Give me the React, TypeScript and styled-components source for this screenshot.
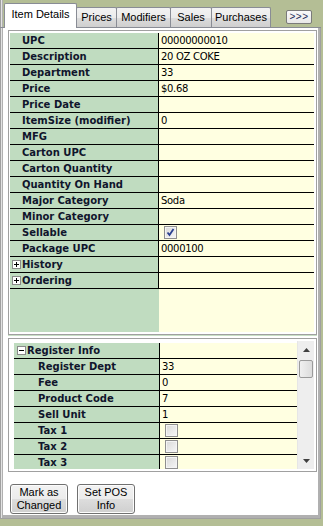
import styled, { createGlobalStyle } from 'styled-components';

const GlobalStyle = createGlobalStyle`
  html, body { margin: 0; padding: 0; }
  body { background: #b4be95; font-family: "DejaVu Sans", sans-serif; }
`;

type Field = {
  label: string;
  value?: string;
  check?: boolean;
  checked?: boolean;
  group?: 'plus' | 'minus';
  indent?: boolean;
};

const itemFields: Field[] = [
  { label: 'UPC', value: '00000000010' },
  { label: 'Description', value: '20 OZ COKE' },
  { label: 'Department', value: '33' },
  { label: 'Price', value: '$0.68' },
  { label: 'Price Date' },
  { label: 'ItemSize (modifier)', value: '0' },
  { label: 'MFG' },
  { label: 'Carton UPC' },
  { label: 'Carton Quantity' },
  { label: 'Quantity On Hand' },
  { label: 'Major Category', value: 'Soda' },
  { label: 'Minor Category' },
  { label: 'Sellable', check: true, checked: true },
  { label: 'Package UPC', value: '0000100' },
  { label: 'History', group: 'plus' },
  { label: 'Ordering', group: 'plus' },
];

const registerFields: Field[] = [
  { label: 'Register Info', group: 'minus' },
  { label: 'Register Dept', value: '33', indent: true },
  { label: 'Fee', value: '0', indent: true },
  { label: 'Product Code', value: '7', indent: true },
  { label: 'Sell Unit', value: '1', indent: true },
  { label: 'Tax 1', check: true, indent: true },
  { label: 'Tax 2', check: true, indent: true },
  { label: 'Tax 3', check: true, indent: true },
];

const tabs = [
  { name: 'Item Details', width: 73 },
  { name: 'Prices', width: 41 },
  { name: 'Modifiers', width: 55 },
  { name: 'Sales', width: 42 },
  { name: 'Purchases', width: 60 },
];

function Expander({ open }: { open: boolean }) {
  return (
    <ExpandBox>
      <svg width="7" height="7" viewBox="0 0 7 7">
        <path d="M1 3.5h5" stroke="#000" strokeWidth="1" />
        {!open && <path d="M3.5 1v5" stroke="#000" strokeWidth="1" />}
      </svg>
    </ExpandBox>
  );
}

function CheckBox({ checked }: { checked?: boolean }) {
  return (
    <Check>
      {checked && (
        <svg width="9" height="9" viewBox="0 0 9 9">
          <path d="M1.5 4.5 L3.5 7 L7.5 1" stroke="#2b4190" strokeWidth="1.8" fill="none" />
        </svg>
      )}
    </Check>
  );
}

function PropRow({ field, labelWidth }: { field: Field; labelWidth: number }) {
  const pad = field.group ? 0 : field.indent ? 24 : 12;
  return (
    <Row>
      <LabelCell $width={labelWidth} $pad={pad}>
        {field.group && <Expander open={field.group === 'minus'} />}
        {field.label}
      </LabelCell>
      <ValueCell>
        {field.check ? <CheckBox checked={field.checked} /> : field.value}
      </ValueCell>
    </Row>
  );
}

export default function App() {
  return (
    <Window>
      <GlobalStyle />
      <TabStrip>
        {tabs.map((t, i) => (
          <Tab key={t.name} $active={i === 0} $width={t.width}>
            {t.name}
          </Tab>
        ))}
        <MoreButton>&gt;&gt;&gt;</MoreButton>
      </TabStrip>
      <Panel>
        <GridFrame>
          {itemFields.map((f) => (
            <PropRow key={f.label} field={f} labelWidth={149} />
          ))}
          <Filler>
            <FillerLabel $width={149} />
            <FillerValue />
          </Filler>
        </GridFrame>
        <Splitter />
        <GridFrame2>
          <RowsArea>
            {registerFields.map((f) => (
              <PropRow key={f.label} field={f} labelWidth={146} />
            ))}
          </RowsArea>
          <ScrollBar>
            <ScrollArrow>
              <svg width="7" height="4" viewBox="0 0 7 4">
                <path d="M0 4 L3.5 0 L7 4 Z" fill="#404040" />
              </svg>
            </ScrollArrow>
            <Thumb />
            <Track />
            <ScrollArrow>
              <svg width="7" height="4" viewBox="0 0 7 4">
                <path d="M0 0 L3.5 4 L7 0 Z" fill="#404040" />
              </svg>
            </ScrollArrow>
          </ScrollBar>
        </GridFrame2>
        <ButtonRow>
          <PushButton>
            Mark as
            <br />
            Changed
          </PushButton>
          <PushButton>
            Set POS
            <br />
            Info
          </PushButton>
        </ButtonRow>
      </Panel>
    </Window>
  );
}

const Window = styled.div`
  width: 323px;
  height: 526px;
  display: flex;
  flex-direction: column;
  background: #b4be95;
  padding: 0 2px 7px 0;
  box-sizing: border-box;
`;

const TabStrip = styled.div`
  display: flex;
  align-items: flex-end;
  height: 27px;
  flex-shrink: 0;
  padding-left: 4px;
  box-shadow: inset 1px 0 #a0a0a0, inset 2px 0 #e3e3e3, inset 3px 0 #b0b0b0;
  position: relative;
  z-index: 1;
`;

const Tab = styled.div<{ $active?: boolean; $width: number }>`
  box-sizing: border-box;
  width: ${({ $width }) => $width}px;
  height: ${({ $active }) => ($active ? 24 : 20)}px;
  margin-left: ${({ $active }) => ($active ? 0 : -1)}px;
  border: 1px solid #898c95;
  border-bottom: none;
  border-radius: 2px 2px 0 0;
  background: ${({ $active }) =>
    $active ? '#fff' : 'linear-gradient(#f2f2f2, #ebebeb 50%, #dddddd 51%, #cfcfcf)'};
  font-family: "Liberation Sans", Arial, sans-serif;
  font-size: 11px;
  color: #000;
  text-align: center;
  line-height: ${({ $active }) => ($active ? 21 : 19)}px;
  white-space: nowrap;
  &:first-child {
    padding-bottom: 1px;
    height: 25px;
    margin-bottom: -1px;
  }
`;

const MoreButton = styled.div`
  align-self: flex-start;
  margin: 10px 9px 0 auto;
  box-sizing: border-box;
  width: 26px;
  height: 14px;
  border: 1px solid #7a7a7a;
  border-radius: 2px;
  background: linear-gradient(#fafafa, #e8e8e8);
  font-family: "Liberation Sans", Arial, sans-serif;
  font-size: 10px;
  line-height: 12px;
  text-align: center;
  color: #1c2a5a;
  letter-spacing: 0.5px;
`;

const Panel = styled.div`
  flex: 1;
  display: flex;
  flex-direction: column;
  background: #fff;
  border-top: 1px solid #898c95;
  border-bottom: 1px solid #a0a0a0;
  box-shadow: inset 1px 0 #a0a0a0, inset 2px 0 #e3e3e3, inset 3px 0 #b0b0b0,
    inset -1px 0 #a0a0a0, inset -3px 0 #b0b0b0, inset 0 -3px #b0b0b0;
  padding: 2px 4px 0 8px;
`;

const GridFrame = styled.div`
  display: flex;
  flex-direction: column;
  box-sizing: border-box;
  height: 305px;
  border: 1px solid #a0a0a0;
  padding: 2px 2px 2px 1px;
`;

const Row = styled.div`
  display: flex;
  height: 16px;
  flex-shrink: 0;
  box-sizing: border-box;
  border-bottom: 1px solid #000;
  font-size: 10px;
  line-height: 15px;
`;

const LabelCell = styled.div<{ $width: number; $pad: number }>`
  display: flex;
  align-items: center;
  flex-shrink: 0;
  width: ${({ $width }) => $width}px;
  box-sizing: border-box;
  padding-left: ${({ $pad }) => $pad}px;
  background: #c0dcc0;
  border-right: 1px solid #000;
  font-family: "DejaVu Sans", sans-serif;
  font-weight: bold;
  color: #10152c;
  white-space: nowrap;
  overflow: hidden;
`;

const ValueCell = styled.div`
  flex: 1;
  display: flex;
  align-items: center;
  padding-left: 2px;
  background: #ffffe1;
  font-family: "DejaVu Sans", sans-serif;
  letter-spacing: -0.3px;
  color: #000;
  white-space: nowrap;
  overflow: hidden;
`;

const ExpandBox = styled.span`
  display: inline-flex;
  align-items: center;
  justify-content: center;
  box-sizing: border-box;
  width: 9px;
  height: 9px;
  margin: 0 1px 0 2px;
  border: 1px solid #8a8a8a;
  background: #fff;
`;

const Check = styled.span`
  display: inline-flex;
  align-items: center;
  justify-content: center;
  box-sizing: border-box;
  width: 13px;
  height: 13px;
  margin-left: 3px;
  border: 1px solid #8f8f8f;
  background: linear-gradient(135deg, #d8d8d8, #f7f7f7);
  box-shadow: inset 0 0 0 1px #f4f4f4;
`;

const Filler = styled.div`
  flex: 1;
  display: flex;
`;

const FillerLabel = styled.div<{ $width: number }>`
  width: ${({ $width }) => $width}px;
  background: #c0dcc0;
`;

const FillerValue = styled.div`
  flex: 1;
  background: #ffffe1;
`;

const Splitter = styled.div`
  height: 3px;
  flex-shrink: 0;
  border-top: 1px solid #c8dfc5;
  box-sizing: border-box;
`;

const GridFrame2 = styled.div`
  display: flex;
  box-sizing: border-box;
  height: 134px;
  border: 1px solid #a0a0a0;
  padding: 2px;
`;

const RowsArea = styled.div`
  flex: 1;
  display: flex;
  flex-direction: column;
  padding: 2px 0 0 3px;
  overflow: hidden;
  & > div:first-child > div:first-child {
    padding-left: 1px;
  }
`;

const ScrollBar = styled.div`
  width: 17px;
  flex-shrink: 0;
  display: flex;
  flex-direction: column;
  background: #eeeeee;
  border-left: 1px solid #e6e6e6;
  box-sizing: border-box;
`;

const ScrollArrow = styled.div`
  height: 17px;
  display: flex;
  align-items: center;
  justify-content: center;
  flex-shrink: 0;
`;

const Thumb = styled.div`
  height: 16px;
  margin: 2px 1px 0;
  border: 1px solid #9a9a9a;
  border-radius: 2px;
  background: linear-gradient(90deg, #f0f0f0, #dcdcdc);
  flex-shrink: 0;
`;

const Track = styled.div`
  flex: 1;
`;

const ButtonRow = styled.div`
  display: flex;
  gap: 9px;
  padding: 12px 0 0 2px;
`;

const PushButton = styled.div`
  box-sizing: border-box;
  width: 58px;
  height: 30px;
  border: 1px solid #707070;
  border-radius: 3px;
  background: linear-gradient(#f2f2f2, #ebebeb 50%, #dddddd 51%, #cfcfcf);
  box-shadow: inset 0 0 0 1px #fcfcfc;
  font-family: "Liberation Sans", Arial, sans-serif;
  font-size: 11px;
  line-height: 13px;
  padding-top: 1px;
  text-align: center;
  color: #000;
`;
